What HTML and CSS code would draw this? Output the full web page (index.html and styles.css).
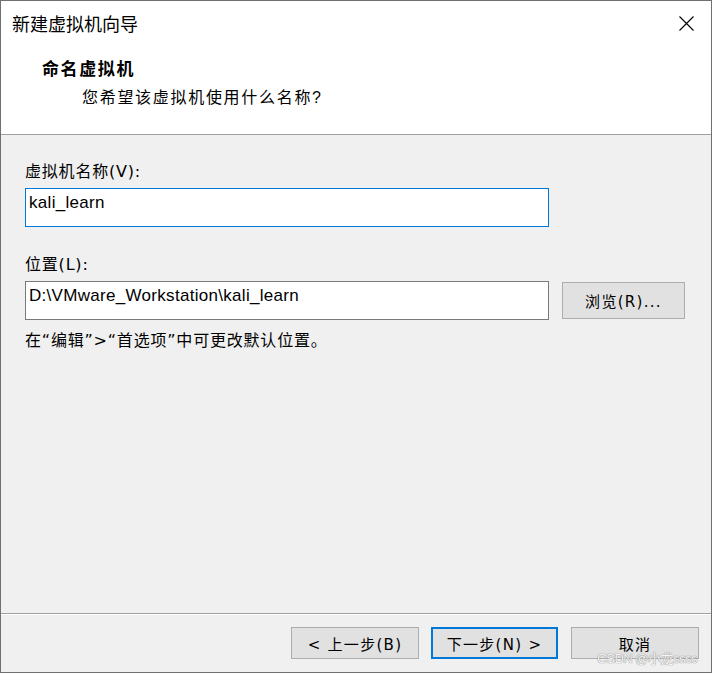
FILE: index.html
```html
<!DOCTYPE html>
<html lang="zh-CN">
<head>
  <meta charset="UTF-8">
  <title>新建虚拟机向导</title>
  <link rel="stylesheet" href="styles.css">
</head>
<body>
  <div class="window">
    <div class="header">
      <div class="title-row">
        <span class="title">新建虚拟机向导</span>
        <button class="close-btn" aria-label="关闭">
          <svg width="15" height="15" viewBox="0 0 15 15">
            <path d="M0.5 0.5 L14.5 14.5 M14.5 0.5 L0.5 14.5" stroke="#000" stroke-width="1.1" fill="none"/>
          </svg>
        </button>
      </div>
      <div class="heading">命名虚拟机</div>
      <div class="subheading">您希望该虚拟机使用什么名称?</div>
    </div>

    <div class="content">
      <div class="label first">虚拟机名称(V):</div>
      <input class="field focused" type="text" value="kali_learn">

      <div class="label second">位置(L):</div>
      <div class="field-row">
        <input class="field" type="text" value="D:\VMware_Workstation\kali_learn">
        <button class="btn browse">浏览(R)...</button>
      </div>
      <div class="hint">在“编辑”&gt;“首选项”中可更改默认位置。</div>
    </div>

    <div class="footer">
      <button class="btn">&lt; 上一步(B)</button>
      <button class="btn default">下一步(N) &gt;</button>
      <button class="btn">取消</button>
      <span class="watermark">CSDN @小龙ssss</span>
    </div>
  </div>
</body>
</html>
```

FILE: styles.css
```css
body {
  margin: 0;
  font-family: "Liberation Sans", "Noto Sans CJK SC", sans-serif;
  color: #000;
  background: #fff;
}
.window {
  width: 712px;
  height: 673px;
  box-sizing: border-box;
  border: 1px solid #707070;
  display: flex;
  flex-direction: column;
  position: relative;
  background: #f0f0f0;
}

/* header */
.header {
  height: 133px;
  background: #fff;
  border-bottom: 1px solid #a0a0a0;
}
.title-row {
  height: 44px;
  display: flex;
  align-items: center;
  justify-content: space-between;
  padding-left: 11px;
}
.title {
  font-family: "Noto Sans CJK SC", sans-serif;
  font-size: 18px;
  line-height: 24px;
}
.close-btn {
  width: 46px;
  height: 44px;
  margin-right: 2px;
  padding: 0;
  border: none;
  background: transparent;
  display: flex;
  align-items: center;
  justify-content: center;
}
.close-btn svg {
  margin-top: 1px;
}
.heading {
  margin: 11px 0 0 41px;
  font-family: "Noto Sans CJK SC", sans-serif;
  font-weight: 700;
  font-size: 17px;
  letter-spacing: 1.6px;
  line-height: 24px;
}
.subheading {
  margin: 6px 0 0 81px;
  font-size: 16px;
  letter-spacing: 1.7px;
  line-height: 24px;
}

/* content */
.content {
  flex: 1;
  padding-left: 24px;
}
.label,
.hint {
  font-family: "DejaVu Sans", "Noto Sans CJK SC", sans-serif;
  font-size: 16px;
  letter-spacing: 0.8px;
  line-height: 22px;
}
.label.first {
  margin-top: 26px;
  margin-bottom: 5px;
}
.label.second {
  margin-top: 27px;
  margin-bottom: 5px;
}
.field {
  display: block;
  width: 524px;
  height: 39px;
  box-sizing: border-box;
  margin: 0;
  padding: 4px 3px 13px;
  border: 1px solid #7a7a7a;
  background: #fff;
  font-family: "Liberation Sans", sans-serif;
  font-size: 17px;
  letter-spacing: 0.3px;
  line-height: 20px;
  color: #000;
  outline: none;
}
.field.focused {
  border-color: #0078d7;
}
.field-row {
  display: flex;
  align-items: center;
  gap: 13px;
}
.hint {
  margin-top: 10px;
}

/* buttons */
.btn {
  height: 32px;
  width: 128px;
  box-sizing: border-box;
  margin: 0;
  padding: 0;
  border: 1px solid #adadad;
  background: #e1e1e1;
  font-family: "DejaVu Sans", "Noto Sans CJK SC", sans-serif;
  font-size: 15px;
  letter-spacing: 1.3px;
  color: #000;
}
.btn.browse {
  width: 123px;
  height: 37px;
}
.btn.default {
  border: 2px solid #0078d7;
  width: 127px;
  margin-right: 1px;
}

/* footer */
.footer {
  height: 59px;
  box-sizing: border-box;
  border-top: 1px solid #a0a0a0;
  box-shadow: inset 0 1px 0 #fff;
  display: flex;
  justify-content: flex-end;
  align-items: flex-start;
  gap: 12px;
  padding: 13px 12px 0 0;
}
.watermark {
  position: absolute;
  right: 14px;
  bottom: 5px;
  font-size: 13px;
  letter-spacing: -0.5px;
  color: #f6f6f6;
  text-shadow: 0 0 1px #8a8a8a, 0 0 1px #8a8a8a;
  pointer-events: none;
}
```
